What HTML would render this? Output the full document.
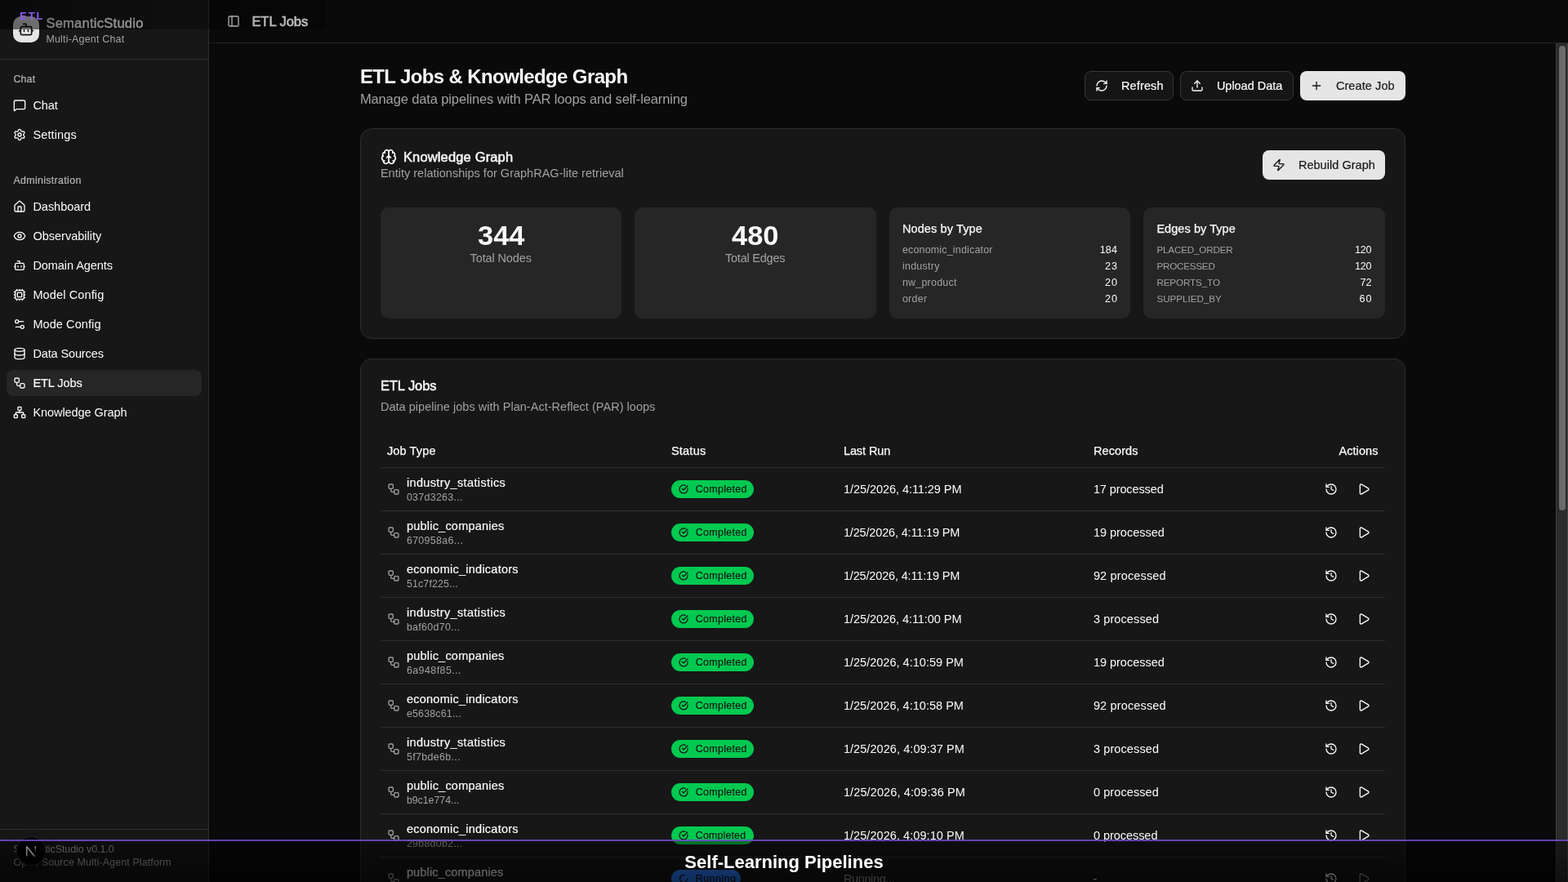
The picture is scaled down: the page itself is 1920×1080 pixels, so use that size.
<!DOCTYPE html>
<html lang="en">
<head>
<meta charset="utf-8">
<title>ETL Jobs - SemanticStudio</title>
<style>
*{box-sizing:border-box;margin:0;padding:0}
html,body{width:1920px;height:1080px;overflow:hidden;background:#0a0a0a;color:#fafafa;
  font-family:"Liberation Sans",sans-serif;font-size:14px;line-height:20px;white-space:nowrap;-webkit-font-smoothing:antialiased}
ul{list-style:none}
svg{display:block;flex:none}
.app{will-change:transform;position:absolute;left:0;top:0;width:1920px;height:1080px;display:flex;overflow:hidden}
/* sidebar */
.sb{width:256px;height:1080px;background:#171717;border-right:1px solid #2e2e2e;flex:none;position:relative;display:flex;flex-direction:column}
.sb-head{height:73px;border-bottom:1px solid #2e2e2e;padding:16px;display:flex;align-items:center;gap:8px}
.logo{width:32px;height:32px;border-radius:10px;background:#e5e5e5;color:#171717;display:flex;align-items:center;justify-content:center}
.brand .b1{font-size:16.5px;line-height:24px;color:#fafafa;-webkit-text-stroke:.45px #fafafa}
.brand .b2{font-size:12.4px;line-height:16px;color:#a1a1a1}
.sb-content{flex:1;display:flex;flex-direction:column;gap:8px}
.grp{padding:8px}
.gl{height:32px;padding:0 8px;display:flex;align-items:center;font-size:12.4px;color:#b4b4b4;-webkit-text-stroke:.2px #b4b4b4}
.grp ul{display:flex;flex-direction:column;gap:4px}
.mi{height:32px;border-radius:8px;padding:0 8px;display:flex;align-items:center;gap:8px;font-size:14.5px;color:#fafafa}
.mi.active{background:#262626;-webkit-text-stroke:.15px #fafafa}
.sb-foot{border-top:1px solid #2e2e2e;padding:16px;height:65px;font-size:12.4px;line-height:16px;color:#a1a1a1}
/* main */
.main{flex:1;position:relative;height:1080px;background:#0a0a0a}
.top{height:53px;border-bottom:1px solid #222;display:flex;align-items:center;padding:0 16px;gap:8px}
.trig{width:28px;height:28px;display:flex;align-items:center;justify-content:center;color:#fafafa}
.top h1{font-size:16.5px;line-height:28px;font-weight:400;-webkit-text-stroke:.5px #fafafa}
.scroll{position:absolute;left:0;top:53px;width:1649px;height:1027px;overflow:hidden;padding:24px}
.wrap{width:1280px;margin:0 auto}
.sbar{position:absolute;right:0;top:53px;width:15px;height:1027px;background:#2c2c2c;border-left:1px solid #3d3d3d;border-right:1px solid #484848}
.thumb{position:absolute;left:3px;top:3px;width:8px;height:569px;border-radius:4px;background:#6b6b6b}
.ph{display:flex;justify-content:space-between;align-items:center;height:56px}
.ph h2{font-size:24px;line-height:32px;font-weight:700;position:relative;top:1px}
.ph p{font-size:16.5px;line-height:24px;color:#a1a1a1}
.btns{display:flex;gap:8px}
.btn{height:36px;border-radius:8px;display:inline-flex;align-items:center;padding:0 12px;gap:16px;font-size:14.5px;white-space:nowrap;-webkit-text-stroke:.18px currentColor}
.btn.out{border:1px solid #373737;background:#151515;color:#fafafa}
.btn.pri{background:#e5e5e5;color:#171717}
.card{background:#171717;border:1px solid #2d2d2d;border-radius:14px;margin-top:24px;padding:24px}
.ch{display:flex;justify-content:space-between;align-items:center;height:40px}
.ct{display:flex;align-items:center;gap:8px;font-size:16.5px;line-height:20px;-webkit-text-stroke:.5px #fafafa}
.cd{font-size:14.5px;line-height:20px;color:#a1a1a1}
.stats{display:grid;grid-template-columns:repeat(4,1fr);gap:16px;margin-top:32px}
.st{height:136px;border-radius:10px;background:#262626;padding:16px}
.st.ctr{text-align:center}
.num{font-size:32px;line-height:36px;font-weight:700}
.num span{display:inline-block;transform:scale(1.075,1.03);position:relative;top:1px}
.lbl{font-size:14.5px;line-height:20px;color:#a1a1a1}
.sh{font-size:14.5px;line-height:20px;margin-bottom:8px;-webkit-text-stroke:.25px #fafafa}
.kv{display:flex;justify-content:space-between;font-size:12.4px;line-height:16px;margin-top:4px}
.kv:nth-child(2){margin-top:0}
.kv .k{color:#a1a1a1}
.kv .k.up{font-size:11.7px}
.kv .v{font-size:12.6px}
.jobs{height:800px}
.jtitle{font-size:16.5px;line-height:16px;-webkit-text-stroke:.5px #fafafa}
.jh .cd{margin-top:8px}
table{width:100%;border-collapse:collapse;margin-top:24px;table-layout:fixed}
th{height:40px;text-align:left;font-weight:400;font-size:14.5px;padding:0 8px;border-bottom:1px solid #2e2e2e;-webkit-text-stroke:.25px #fafafa}
td{height:53px;padding:8px;border-bottom:1px solid #2e2e2e;font-size:14.5px;vertical-align:middle}
.c1{width:348px}.c2{width:211px}.c3{width:306px}.c4{width:222px}.c5{text-align:right}
th.c5{text-align:right}
.jt{display:flex;align-items:center;gap:8px}
.wf{color:#a1a1a1}
.jn{font-size:14.5px;line-height:20px;-webkit-text-stroke:.18px #fafafa}
.ji{font-size:12.4px;line-height:16px;color:#a1a1a1}
.badge{display:inline-flex;align-items:center;height:22px;border-radius:11px;padding:0 9px;gap:8.5px;font-size:12.4px;line-height:16px;color:#171717;vertical-align:middle;-webkit-text-stroke:.2px #171717}
.badge.ok{background:#00c950;width:101px}
.badge.run{background:#2b7fff;width:85px}
.mut{color:#a1a1a1}
.acts{display:flex;justify-content:flex-end;gap:4px}
.ib{width:36px;height:36px;display:flex;align-items:center;justify-content:center;color:#fafafa}
.ib.dis{opacity:.5}
/* overlays */
.devn{position:absolute;left:20px;top:1024px;width:36px;height:36px;border-radius:18px;background:#000;box-shadow:inset 0 0 0 1px #262626,0 8px 16px rgba(0,0,0,.4)}
.ov-top{will-change:transform;position:absolute;left:0;top:0;width:400px;height:36px;background:linear-gradient(to right,rgba(0,0,0,.56),rgba(0,0,0,.2))}
.ov-top span{position:absolute;left:24px;top:12px;font-size:13px;line-height:15px;font-weight:700;letter-spacing:2px;color:#8b5cf6}
.ov-bot{will-change:transform;position:absolute;left:0;top:1028px;width:1920px;height:52px;border-top:2px solid rgba(139,92,246,.7);background:linear-gradient(to bottom,rgba(0,0,0,.42),rgba(0,0,0,.66))}
.cap{position:absolute;left:0;width:1920px;top:13px;text-align:center;font-size:22px;line-height:26px;font-weight:700;color:#fff}

.sb span,.top h1 span,.ph h2 span,.ph p span,.btn span,.ct span,.cd span,.sh span,.k span,.jtitle span,th span,td span{position:relative;left:.4px}
th.c5 span,.v span{left:0}

</style>
</head>
<body>
<div class="app">

<aside class="sb">
  <div class="sb-head">
    <div class="logo"><svg width="20" height="20" viewBox="0 0 24 24" fill="none" stroke="currentColor" stroke-width="2" stroke-linecap="round" stroke-linejoin="round"><path d="M12 8V4H8"/><rect width="16" height="12" x="4" y="8" rx="2"/><path d="M2 14h2"/><path d="M20 14h2"/><path d="M15 13v2"/><path d="M9 13v2"/></svg></div>
    <div class="brand"><div class="b1"><span style="letter-spacing:0.262px;margin-right:-0.262px">SemanticStudio</span></div><div class="b2"><span style="letter-spacing:0.234px;margin-right:-0.234px">Multi-Agent Chat</span></div></div>
  </div>
  <div class="sb-content">
    <div class="grp">
      <div class="gl"><span style="letter-spacing:0.190px;margin-right:-0.190px">Chat</span></div>
      <ul>
        <li class="mi"><svg width="16" height="16" viewBox="0 0 24 24" fill="none" stroke="currentColor" stroke-width="2" stroke-linecap="round" stroke-linejoin="round"><path d="M22 17a2 2 0 0 1-2 2H6.828a2 2 0 0 0-1.414.586l-2.202 2.202A.71.71 0 0 1 2 21.286V5a2 2 0 0 1 2-2h16a2 2 0 0 1 2 2z"/></svg><span style="letter-spacing:-0.115px;margin-right:0.115px">Chat</span></li>
        <li class="mi"><svg width="16" height="16" viewBox="0 0 24 24" fill="none" stroke="currentColor" stroke-width="2" stroke-linecap="round" stroke-linejoin="round"><path d="M9.671 4.136a2.34 2.34 0 0 1 4.659 0 2.34 2.34 0 0 0 3.319 1.915 2.34 2.34 0 0 1 2.33 4.033 2.34 2.34 0 0 0 0 3.831 2.34 2.34 0 0 1-2.33 4.033 2.34 2.34 0 0 0-3.319 1.915 2.34 2.34 0 0 1-4.659 0 2.34 2.34 0 0 0-3.32-1.915 2.34 2.34 0 0 1-2.33-4.033 2.34 2.34 0 0 0 0-3.831A2.34 2.34 0 0 1 6.35 6.051a2.34 2.34 0 0 0 3.319-1.915"/><circle cx="12" cy="12" r="3"/></svg><span style="letter-spacing:0.137px;margin-right:-0.137px">Settings</span></li>
      </ul>
    </div>
    <div class="grp">
      <div class="gl"><span style="letter-spacing:0.338px;margin-right:-0.338px">Administration</span></div>
      <ul>
        <li class="mi"><svg width="16" height="16" viewBox="0 0 24 24" fill="none" stroke="currentColor" stroke-width="2" stroke-linecap="round" stroke-linejoin="round"><path d="M15 21v-8a1 1 0 0 0-1-1h-4a1 1 0 0 0-1 1v8"/><path d="M3 10a2 2 0 0 1 .709-1.528l7-5.999a2 2 0 0 1 2.582 0l7 5.999A2 2 0 0 1 21 10v9a2 2 0 0 1-2 2H5a2 2 0 0 1-2-2z"/></svg><span style="letter-spacing:-0.025px;margin-right:0.025px">Dashboard</span></li>
        <li class="mi"><svg width="16" height="16" viewBox="0 0 24 24" fill="none" stroke="currentColor" stroke-width="2" stroke-linecap="round" stroke-linejoin="round"><path d="M2.062 12.348a1 1 0 0 1 0-.696 10.75 10.75 0 0 1 19.876 0 1 1 0 0 1 0 .696 10.75 10.75 0 0 1-19.876 0"/><circle cx="12" cy="12" r="3"/></svg><span style="letter-spacing:0.013px;margin-right:-0.013px">Observability</span></li>
        <li class="mi"><svg width="16" height="16" viewBox="0 0 24 24" fill="none" stroke="currentColor" stroke-width="2" stroke-linecap="round" stroke-linejoin="round"><path d="M12 8V4H8"/><rect width="16" height="12" x="4" y="8" rx="2"/><path d="M2 14h2"/><path d="M20 14h2"/><path d="M15 13v2"/><path d="M9 13v2"/></svg><span style="letter-spacing:-0.061px;margin-right:0.061px">Domain Agents</span></li>
        <li class="mi"><svg width="16" height="16" viewBox="0 0 24 24" fill="none" stroke="currentColor" stroke-width="2" stroke-linecap="round" stroke-linejoin="round"><path d="M12 20v2"/><path d="M12 2v2"/><path d="M17 20v2"/><path d="M17 2v2"/><path d="M2 12h2"/><path d="M2 17h2"/><path d="M2 7h2"/><path d="M20 12h2"/><path d="M20 17h2"/><path d="M20 7h2"/><path d="M7 20v2"/><path d="M7 2v2"/><rect x="4" y="4" width="16" height="16" rx="2"/><rect x="8" y="8" width="8" height="8" rx="1"/></svg><span style="letter-spacing:0.128px;margin-right:-0.128px">Model Config</span></li>
        <li class="mi"><svg width="16" height="16" viewBox="0 0 24 24" fill="none" stroke="currentColor" stroke-width="2" stroke-linecap="round" stroke-linejoin="round"><path d="M14 17H5"/><path d="M19 7h-9"/><circle cx="17" cy="17" r="3"/><circle cx="7" cy="7" r="3"/></svg><span style="letter-spacing:0.084px;margin-right:-0.084px">Mode Config</span></li>
        <li class="mi"><svg width="16" height="16" viewBox="0 0 24 24" fill="none" stroke="currentColor" stroke-width="2" stroke-linecap="round" stroke-linejoin="round"><ellipse cx="12" cy="5" rx="9" ry="3"/><path d="M3 5V19A9 3 0 0 0 21 19V5"/><path d="M3 12A9 3 0 0 0 21 12"/></svg><span style="letter-spacing:-0.123px;margin-right:0.123px">Data Sources</span></li>
        <li class="mi active"><svg width="16" height="16" viewBox="0 0 24 24" fill="none" stroke="currentColor" stroke-width="2" stroke-linecap="round" stroke-linejoin="round"><rect width="8" height="8" x="3" y="3" rx="2"/><path d="M7 11v4a2 2 0 0 0 2 2h4"/><rect width="8" height="8" x="13" y="13" rx="2"/></svg><span style="letter-spacing:-0.052px;margin-right:0.052px">ETL Jobs</span></li>
        <li class="mi"><svg width="16" height="16" viewBox="0 0 24 24" fill="none" stroke="currentColor" stroke-width="2" stroke-linecap="round" stroke-linejoin="round"><rect x="16" y="16" width="6" height="6" rx="1"/><rect x="2" y="16" width="6" height="6" rx="1"/><rect x="9" y="2" width="6" height="6" rx="1"/><path d="M5 16v-3a1 1 0 0 1 1-1h12a1 1 0 0 1 1 1v3"/><path d="M12 12V8"/></svg><span style="letter-spacing:-0.070px;margin-right:0.070px">Knowledge Graph</span></li>
      </ul>
    </div>
  </div>
  <div class="sb-foot"><p><span style="letter-spacing:-0.039px;margin-right:0.039px">SemanticStudio v0.1.0</span></p><p><span style="letter-spacing:0.143px;margin-right:-0.143px">Open Source Multi-Agent Platform</span></p></div>
</aside>

<div class="main">
  <header class="top">
    <span class="trig"><svg width="16" height="16" viewBox="0 0 24 24" fill="none" stroke="currentColor" stroke-width="2" stroke-linecap="round" stroke-linejoin="round"><rect width="18" height="18" x="3" y="3" rx="2"/><path d="M9 3v18"/></svg></span>
    <h1><span style="letter-spacing:-0.043px;margin-right:0.043px">ETL Jobs</span></h1>
  </header>
  <div class="scroll">
    <div class="wrap">
      <div class="ph">
        <div><h2><span style="letter-spacing:-0.617px;margin-right:0.617px">ETL Jobs &amp; Knowledge Graph</span></h2><p><span style="letter-spacing:-0.128px;margin-right:0.128px">Manage data pipelines with PAR loops and self-learning</span></p></div>
        <div class="btns">
          <span class="btn out" style="width:109px"><svg width="16" height="16" viewBox="0 0 24 24" fill="none" stroke="currentColor" stroke-width="2" stroke-linecap="round" stroke-linejoin="round"><path d="M3 12a9 9 0 0 1 9-9 9.75 9.75 0 0 1 6.74 2.74L21 8"/><path d="M21 3v5h-5"/><path d="M21 12a9 9 0 0 1-9 9 9.75 9.75 0 0 1-6.74-2.74L3 16"/><path d="M8 16H3v5"/></svg><span style="letter-spacing:0.150px;margin-right:-0.150px">Refresh</span></span>
          <span class="btn out" style="width:139px"><svg width="16" height="16" viewBox="0 0 24 24" fill="none" stroke="currentColor" stroke-width="2" stroke-linecap="round" stroke-linejoin="round"><path d="M21 15v4a2 2 0 0 1-2 2H5a2 2 0 0 1-2-2v-4"/><path d="m17 8-5-5-5 5"/><path d="M12 3v12"/></svg><span style="letter-spacing:-0.023px;margin-right:0.023px">Upload Data</span></span>
          <span class="btn pri" style="width:129px"><svg width="16" height="16" viewBox="0 0 24 24" fill="none" stroke="currentColor" stroke-width="2" stroke-linecap="round" stroke-linejoin="round"><path d="M5 12h14"/><path d="M12 5v14"/></svg><span style="letter-spacing:0.092px;margin-right:-0.092px">Create Job</span></span>
        </div>
      </div>
      <section class="card kg">
        <div class="ch">
          <div><div class="ct"><svg width="20" height="20" viewBox="0 0 24 24" fill="none" stroke="currentColor" stroke-width="2" stroke-linecap="round" stroke-linejoin="round"><path d="M12 18V5"/><path d="M15 13a4.17 4.17 0 0 1-3-4 4.17 4.17 0 0 1-3 4"/><path d="M17.598 6.5A3 3 0 1 0 12 5a3 3 0 1 0-5.598 1.5"/><path d="M17.997 5.125a4 4 0 0 1 2.526 5.77"/><path d="M18 18a4 4 0 0 0 2-7.464"/><path d="M19.967 17.483A4 4 0 1 1 12 18a4 4 0 1 1-7.967-.517"/><path d="M6 18a4 4 0 0 1-2-7.464"/><path d="M6.003 5.125a4 4 0 0 0-2.526 5.77"/></svg><span style="letter-spacing:0.153px;margin-right:-0.153px">Knowledge Graph</span></div><div class="cd"><span style="letter-spacing:0.011px;margin-right:-0.011px">Entity relationships for GraphRAG-lite retrieval</span></div></div>
          <span class="btn pri" style="width:150px"><svg width="16" height="16" viewBox="0 0 24 24" fill="none" stroke="currentColor" stroke-width="2" stroke-linecap="round" stroke-linejoin="round"><path d="M4 14a1 1 0 0 1-.78-1.63l9.9-10.2a.5.5 0 0 1 .86.46l-1.92 6.02A1 1 0 0 0 13 10h7a1 1 0 0 1 .78 1.63l-9.9 10.2a.5.5 0 0 1-.86-.46l1.92-6.02A1 1 0 0 0 11 14z"/></svg><span style="letter-spacing:0.038px;margin-right:-0.038px">Rebuild Graph</span></span>
        </div>
        <div class="stats">
          <div class="st ctr"><div class="num"><span>344</span></div><div class="lbl"><span style="letter-spacing:-0.127px;margin-right:0.127px">Total Nodes</span></div></div>
          <div class="st ctr"><div class="num"><span>480</span></div><div class="lbl"><span style="letter-spacing:-0.215px;margin-right:0.215px">Total Edges</span></div></div>
          <div class="st"><div class="sh"><span style="letter-spacing:0.116px;margin-right:-0.116px">Nodes by Type</span></div><div class="kv"><span class="k"><span style="letter-spacing:0.225px;margin-right:-0.225px">economic_indicator</span></span><span class="v"><span style="letter-spacing:0.157px;margin-right:-0.157px">184</span></span></div><div class="kv"><span class="k"><span style="letter-spacing:0.299px;margin-right:-0.299px">industry</span></span><span class="v"><span style="letter-spacing:1.036px;margin-right:-1.036px">23</span></span></div><div class="kv"><span class="k"><span style="letter-spacing:0.275px;margin-right:-0.275px">nw_product</span></span><span class="v"><span style="letter-spacing:1.037px;margin-right:-1.037px">20</span></span></div><div class="kv"><span class="k"><span style="letter-spacing:0.307px;margin-right:-0.307px">order</span></span><span class="v"><span style="letter-spacing:1.037px;margin-right:-1.037px">20</span></span></div></div>
          <div class="st"><div class="sh"><span style="letter-spacing:0.057px;margin-right:-0.057px">Edges by Type</span></div><div class="kv"><span class="k up"><span style="letter-spacing:-0.190px;margin-right:0.190px">PLACED_ORDER</span></span><span class="v"><span style="letter-spacing:-0.262px;margin-right:0.262px">120</span></span></div><div class="kv"><span class="k up"><span style="letter-spacing:-0.242px;margin-right:0.242px">PROCESSED</span></span><span class="v"><span style="letter-spacing:-0.262px;margin-right:0.262px">120</span></span></div><div class="kv"><span class="k up"><span style="letter-spacing:-0.133px;margin-right:0.133px">REPORTS_TO</span></span><span class="v"><span style="letter-spacing:0.080px;margin-right:-0.080px">72</span></span></div><div class="kv"><span class="k up"><span style="letter-spacing:-0.054px;margin-right:0.054px">SUPPLIED_BY</span></span><span class="v"><span style="letter-spacing:0.967px;margin-right:-0.967px">60</span></span></div></div>
        </div>
      </section>
      <section class="card jobs">
        <div class="jh"><div class="jtitle"><span style="letter-spacing:-0.062px;margin-right:0.062px">ETL Jobs</span></div><div class="cd"><span style="letter-spacing:0.029px;margin-right:-0.029px">Data pipeline jobs with Plan-Act-Reflect (PAR) loops</span></div></div>
        <table>
          <thead><tr><th class="c1"><span style="letter-spacing:0.146px;margin-right:-0.146px">Job Type</span></th><th class="c2"><span style="letter-spacing:0.238px;margin-right:-0.238px">Status</span></th><th class="c3"><span style="letter-spacing:-0.073px;margin-right:0.073px">Last Run</span></th><th class="c4"><span style="letter-spacing:0.100px;margin-right:-0.100px">Records</span></th><th class="c5"><span style="letter-spacing:0.095px;margin-right:-0.095px">Actions</span></th></tr></thead>
          <tbody>
<tr><td class="c1"><div class="jt"><svg class="wf" width="16" height="16" viewBox="0 0 24 24" fill="none" stroke="currentColor" stroke-width="2" stroke-linecap="round" stroke-linejoin="round"><rect width="8" height="8" x="3" y="3" rx="2"/><path d="M7 11v4a2 2 0 0 0 2 2h4"/><rect width="8" height="8" x="13" y="13" rx="2"/></svg><div><div class="jn"><span style="letter-spacing:0.364px;margin-right:-0.364px">industry_statistics</span></div><div class="ji"><span style="letter-spacing:0.307px;margin-right:-0.307px">037d3263...</span></div></div></div></td><td class="c2"><span class="badge ok"><svg width="12" height="12" viewBox="0 0 24 24" fill="none" stroke="currentColor" stroke-width="2.5" stroke-linecap="round" stroke-linejoin="round"><path d="M21.801 10A10 10 0 1 1 17 3.335"/><path d="m9 11 3 3L22 4"/></svg><span style="letter-spacing:0.325px;margin-right:-0.325px">Completed</span></span></td><td class="c3"><span style="letter-spacing:-0.051px;margin-right:0.051px">1/25/2026, 4:11:29 PM</span></td><td class="c4"><span style="letter-spacing:-0.109px;margin-right:0.109px">17 processed</span></td><td class="c5"><div class="acts"><span class="ib"><svg width="16" height="16" viewBox="0 0 24 24" fill="none" stroke="currentColor" stroke-width="2" stroke-linecap="round" stroke-linejoin="round"><path d="M3 12a9 9 0 1 0 9-9 9.750 9.750 0 0 0-6.740 2.740L3 8"/><path d="M3 3v5h5"/><path d="M12 7v5l4 2"/></svg></span><span class="ib"><svg width="16" height="16" viewBox="0 0 24 24" fill="none" stroke="currentColor" stroke-width="2" stroke-linecap="round" stroke-linejoin="round"><path d="M5 5a2 2 0 0 1 3.008-1.728l11.997 6.998a2 2 0 0 1 .003 3.458l-12 7A2 2 0 0 1 5 19z"/></svg></span></div></td></tr>
<tr><td class="c1"><div class="jt"><svg class="wf" width="16" height="16" viewBox="0 0 24 24" fill="none" stroke="currentColor" stroke-width="2" stroke-linecap="round" stroke-linejoin="round"><rect width="8" height="8" x="3" y="3" rx="2"/><path d="M7 11v4a2 2 0 0 0 2 2h4"/><rect width="8" height="8" x="13" y="13" rx="2"/></svg><div><div class="jn"><span style="letter-spacing:0.222px;margin-right:-0.222px">public_companies</span></div><div class="ji"><span style="letter-spacing:0.348px;margin-right:-0.348px">670958a6...</span></div></div></div></td><td class="c2"><span class="badge ok"><svg width="12" height="12" viewBox="0 0 24 24" fill="none" stroke="currentColor" stroke-width="2.5" stroke-linecap="round" stroke-linejoin="round"><path d="M21.801 10A10 10 0 1 1 17 3.335"/><path d="m9 11 3 3L22 4"/></svg><span style="letter-spacing:0.325px;margin-right:-0.325px">Completed</span></span></td><td class="c3"><span style="letter-spacing:-0.160px;margin-right:0.160px">1/25/2026, 4:11:19 PM</span></td><td class="c4"><span style="letter-spacing:-0.018px;margin-right:0.018px">19 processed</span></td><td class="c5"><div class="acts"><span class="ib"><svg width="16" height="16" viewBox="0 0 24 24" fill="none" stroke="currentColor" stroke-width="2" stroke-linecap="round" stroke-linejoin="round"><path d="M3 12a9 9 0 1 0 9-9 9.750 9.750 0 0 0-6.740 2.740L3 8"/><path d="M3 3v5h5"/><path d="M12 7v5l4 2"/></svg></span><span class="ib"><svg width="16" height="16" viewBox="0 0 24 24" fill="none" stroke="currentColor" stroke-width="2" stroke-linecap="round" stroke-linejoin="round"><path d="M5 5a2 2 0 0 1 3.008-1.728l11.997 6.998a2 2 0 0 1 .003 3.458l-12 7A2 2 0 0 1 5 19z"/></svg></span></div></td></tr>
<tr><td class="c1"><div class="jt"><svg class="wf" width="16" height="16" viewBox="0 0 24 24" fill="none" stroke="currentColor" stroke-width="2" stroke-linecap="round" stroke-linejoin="round"><rect width="8" height="8" x="3" y="3" rx="2"/><path d="M7 11v4a2 2 0 0 0 2 2h4"/><rect width="8" height="8" x="13" y="13" rx="2"/></svg><div><div class="jn"><span style="letter-spacing:0.253px;margin-right:-0.253px">economic_indicators</span></div><div class="ji"><span style="letter-spacing:0.155px;margin-right:-0.155px">51c7f225...</span></div></div></div></td><td class="c2"><span class="badge ok"><svg width="12" height="12" viewBox="0 0 24 24" fill="none" stroke="currentColor" stroke-width="2.5" stroke-linecap="round" stroke-linejoin="round"><path d="M21.801 10A10 10 0 1 1 17 3.335"/><path d="m9 11 3 3L22 4"/></svg><span style="letter-spacing:0.325px;margin-right:-0.325px">Completed</span></span></td><td class="c3"><span style="letter-spacing:-0.160px;margin-right:0.160px">1/25/2026, 4:11:19 PM</span></td><td class="c4"><span style="letter-spacing:0.155px;margin-right:-0.155px">92 processed</span></td><td class="c5"><div class="acts"><span class="ib"><svg width="16" height="16" viewBox="0 0 24 24" fill="none" stroke="currentColor" stroke-width="2" stroke-linecap="round" stroke-linejoin="round"><path d="M3 12a9 9 0 1 0 9-9 9.750 9.750 0 0 0-6.740 2.740L3 8"/><path d="M3 3v5h5"/><path d="M12 7v5l4 2"/></svg></span><span class="ib"><svg width="16" height="16" viewBox="0 0 24 24" fill="none" stroke="currentColor" stroke-width="2" stroke-linecap="round" stroke-linejoin="round"><path d="M5 5a2 2 0 0 1 3.008-1.728l11.997 6.998a2 2 0 0 1 .003 3.458l-12 7A2 2 0 0 1 5 19z"/></svg></span></div></td></tr>
<tr><td class="c1"><div class="jt"><svg class="wf" width="16" height="16" viewBox="0 0 24 24" fill="none" stroke="currentColor" stroke-width="2" stroke-linecap="round" stroke-linejoin="round"><rect width="8" height="8" x="3" y="3" rx="2"/><path d="M7 11v4a2 2 0 0 0 2 2h4"/><rect width="8" height="8" x="13" y="13" rx="2"/></svg><div><div class="jn"><span style="letter-spacing:0.364px;margin-right:-0.364px">industry_statistics</span></div><div class="ji"><span style="letter-spacing:0.334px;margin-right:-0.334px">baf60d70...</span></div></div></div></td><td class="c2"><span class="badge ok"><svg width="12" height="12" viewBox="0 0 24 24" fill="none" stroke="currentColor" stroke-width="2.5" stroke-linecap="round" stroke-linejoin="round"><path d="M21.801 10A10 10 0 1 1 17 3.335"/><path d="m9 11 3 3L22 4"/></svg><span style="letter-spacing:0.325px;margin-right:-0.325px">Completed</span></span></td><td class="c3"><span style="letter-spacing:-0.051px;margin-right:0.051px">1/25/2026, 4:11:00 PM</span></td><td class="c4"><span style="letter-spacing:0.110px;margin-right:-0.110px">3 processed</span></td><td class="c5"><div class="acts"><span class="ib"><svg width="16" height="16" viewBox="0 0 24 24" fill="none" stroke="currentColor" stroke-width="2" stroke-linecap="round" stroke-linejoin="round"><path d="M3 12a9 9 0 1 0 9-9 9.750 9.750 0 0 0-6.740 2.740L3 8"/><path d="M3 3v5h5"/><path d="M12 7v5l4 2"/></svg></span><span class="ib"><svg width="16" height="16" viewBox="0 0 24 24" fill="none" stroke="currentColor" stroke-width="2" stroke-linecap="round" stroke-linejoin="round"><path d="M5 5a2 2 0 0 1 3.008-1.728l11.997 6.998a2 2 0 0 1 .003 3.458l-12 7A2 2 0 0 1 5 19z"/></svg></span></div></td></tr>
<tr><td class="c1"><div class="jt"><svg class="wf" width="16" height="16" viewBox="0 0 24 24" fill="none" stroke="currentColor" stroke-width="2" stroke-linecap="round" stroke-linejoin="round"><rect width="8" height="8" x="3" y="3" rx="2"/><path d="M7 11v4a2 2 0 0 0 2 2h4"/><rect width="8" height="8" x="13" y="13" rx="2"/></svg><div><div class="jn"><span style="letter-spacing:0.222px;margin-right:-0.222px">public_companies</span></div><div class="ji"><span style="letter-spacing:0.464px;margin-right:-0.464px">6a948f85...</span></div></div></div></td><td class="c2"><span class="badge ok"><svg width="12" height="12" viewBox="0 0 24 24" fill="none" stroke="currentColor" stroke-width="2.5" stroke-linecap="round" stroke-linejoin="round"><path d="M21.801 10A10 10 0 1 1 17 3.335"/><path d="m9 11 3 3L22 4"/></svg><span style="letter-spacing:0.325px;margin-right:-0.325px">Completed</span></span></td><td class="c3"><span style="letter-spacing:0.014px;margin-right:-0.014px">1/25/2026, 4:10:59 PM</span></td><td class="c4"><span style="letter-spacing:-0.018px;margin-right:0.018px">19 processed</span></td><td class="c5"><div class="acts"><span class="ib"><svg width="16" height="16" viewBox="0 0 24 24" fill="none" stroke="currentColor" stroke-width="2" stroke-linecap="round" stroke-linejoin="round"><path d="M3 12a9 9 0 1 0 9-9 9.750 9.750 0 0 0-6.740 2.740L3 8"/><path d="M3 3v5h5"/><path d="M12 7v5l4 2"/></svg></span><span class="ib"><svg width="16" height="16" viewBox="0 0 24 24" fill="none" stroke="currentColor" stroke-width="2" stroke-linecap="round" stroke-linejoin="round"><path d="M5 5a2 2 0 0 1 3.008-1.728l11.997 6.998a2 2 0 0 1 .003 3.458l-12 7A2 2 0 0 1 5 19z"/></svg></span></div></td></tr>
<tr><td class="c1"><div class="jt"><svg class="wf" width="16" height="16" viewBox="0 0 24 24" fill="none" stroke="currentColor" stroke-width="2" stroke-linecap="round" stroke-linejoin="round"><rect width="8" height="8" x="3" y="3" rx="2"/><path d="M7 11v4a2 2 0 0 0 2 2h4"/><rect width="8" height="8" x="13" y="13" rx="2"/></svg><div><div class="jn"><span style="letter-spacing:0.253px;margin-right:-0.253px">economic_indicators</span></div><div class="ji"><span style="letter-spacing:0.194px;margin-right:-0.194px">e5638c61...</span></div></div></div></td><td class="c2"><span class="badge ok"><svg width="12" height="12" viewBox="0 0 24 24" fill="none" stroke="currentColor" stroke-width="2.5" stroke-linecap="round" stroke-linejoin="round"><path d="M21.801 10A10 10 0 1 1 17 3.335"/><path d="m9 11 3 3L22 4"/></svg><span style="letter-spacing:0.325px;margin-right:-0.325px">Completed</span></span></td><td class="c3"><span style="letter-spacing:0.014px;margin-right:-0.014px">1/25/2026, 4:10:58 PM</span></td><td class="c4"><span style="letter-spacing:0.155px;margin-right:-0.155px">92 processed</span></td><td class="c5"><div class="acts"><span class="ib"><svg width="16" height="16" viewBox="0 0 24 24" fill="none" stroke="currentColor" stroke-width="2" stroke-linecap="round" stroke-linejoin="round"><path d="M3 12a9 9 0 1 0 9-9 9.750 9.750 0 0 0-6.740 2.740L3 8"/><path d="M3 3v5h5"/><path d="M12 7v5l4 2"/></svg></span><span class="ib"><svg width="16" height="16" viewBox="0 0 24 24" fill="none" stroke="currentColor" stroke-width="2" stroke-linecap="round" stroke-linejoin="round"><path d="M5 5a2 2 0 0 1 3.008-1.728l11.997 6.998a2 2 0 0 1 .003 3.458l-12 7A2 2 0 0 1 5 19z"/></svg></span></div></td></tr>
<tr><td class="c1"><div class="jt"><svg class="wf" width="16" height="16" viewBox="0 0 24 24" fill="none" stroke="currentColor" stroke-width="2" stroke-linecap="round" stroke-linejoin="round"><rect width="8" height="8" x="3" y="3" rx="2"/><path d="M7 11v4a2 2 0 0 0 2 2h4"/><rect width="8" height="8" x="13" y="13" rx="2"/></svg><div><div class="jn"><span style="letter-spacing:0.364px;margin-right:-0.364px">industry_statistics</span></div><div class="ji"><span style="letter-spacing:0.370px;margin-right:-0.370px">5f7bde6b...</span></div></div></div></td><td class="c2"><span class="badge ok"><svg width="12" height="12" viewBox="0 0 24 24" fill="none" stroke="currentColor" stroke-width="2.5" stroke-linecap="round" stroke-linejoin="round"><path d="M21.801 10A10 10 0 1 1 17 3.335"/><path d="m9 11 3 3L22 4"/></svg><span style="letter-spacing:0.325px;margin-right:-0.325px">Completed</span></span></td><td class="c3"><span style="letter-spacing:0.064px;margin-right:-0.064px">1/25/2026, 4:09:37 PM</span></td><td class="c4"><span style="letter-spacing:0.110px;margin-right:-0.110px">3 processed</span></td><td class="c5"><div class="acts"><span class="ib"><svg width="16" height="16" viewBox="0 0 24 24" fill="none" stroke="currentColor" stroke-width="2" stroke-linecap="round" stroke-linejoin="round"><path d="M3 12a9 9 0 1 0 9-9 9.750 9.750 0 0 0-6.740 2.740L3 8"/><path d="M3 3v5h5"/><path d="M12 7v5l4 2"/></svg></span><span class="ib"><svg width="16" height="16" viewBox="0 0 24 24" fill="none" stroke="currentColor" stroke-width="2" stroke-linecap="round" stroke-linejoin="round"><path d="M5 5a2 2 0 0 1 3.008-1.728l11.997 6.998a2 2 0 0 1 .003 3.458l-12 7A2 2 0 0 1 5 19z"/></svg></span></div></td></tr>
<tr><td class="c1"><div class="jt"><svg class="wf" width="16" height="16" viewBox="0 0 24 24" fill="none" stroke="currentColor" stroke-width="2" stroke-linecap="round" stroke-linejoin="round"><rect width="8" height="8" x="3" y="3" rx="2"/><path d="M7 11v4a2 2 0 0 0 2 2h4"/><rect width="8" height="8" x="13" y="13" rx="2"/></svg><div><div class="jn"><span style="letter-spacing:0.222px;margin-right:-0.222px">public_companies</span></div><div class="ji"><span style="letter-spacing:-0.034px;margin-right:0.034px">b9c1e774...</span></div></div></div></td><td class="c2"><span class="badge ok"><svg width="12" height="12" viewBox="0 0 24 24" fill="none" stroke="currentColor" stroke-width="2.5" stroke-linecap="round" stroke-linejoin="round"><path d="M21.801 10A10 10 0 1 1 17 3.335"/><path d="m9 11 3 3L22 4"/></svg><span style="letter-spacing:0.325px;margin-right:-0.325px">Completed</span></span></td><td class="c3"><span style="letter-spacing:0.114px;margin-right:-0.114px">1/25/2026, 4:09:36 PM</span></td><td class="c4"><span style="letter-spacing:0.090px;margin-right:-0.090px">0 processed</span></td><td class="c5"><div class="acts"><span class="ib"><svg width="16" height="16" viewBox="0 0 24 24" fill="none" stroke="currentColor" stroke-width="2" stroke-linecap="round" stroke-linejoin="round"><path d="M3 12a9 9 0 1 0 9-9 9.750 9.750 0 0 0-6.740 2.740L3 8"/><path d="M3 3v5h5"/><path d="M12 7v5l4 2"/></svg></span><span class="ib"><svg width="16" height="16" viewBox="0 0 24 24" fill="none" stroke="currentColor" stroke-width="2" stroke-linecap="round" stroke-linejoin="round"><path d="M5 5a2 2 0 0 1 3.008-1.728l11.997 6.998a2 2 0 0 1 .003 3.458l-12 7A2 2 0 0 1 5 19z"/></svg></span></div></td></tr>
<tr><td class="c1"><div class="jt"><svg class="wf" width="16" height="16" viewBox="0 0 24 24" fill="none" stroke="currentColor" stroke-width="2" stroke-linecap="round" stroke-linejoin="round"><rect width="8" height="8" x="3" y="3" rx="2"/><path d="M7 11v4a2 2 0 0 0 2 2h4"/><rect width="8" height="8" x="13" y="13" rx="2"/></svg><div><div class="jn"><span style="letter-spacing:0.253px;margin-right:-0.253px">economic_indicators</span></div><div class="ji"><span style="letter-spacing:0.279px;margin-right:-0.279px">29b8d0b2...</span></div></div></div></td><td class="c2"><span class="badge ok"><svg width="12" height="12" viewBox="0 0 24 24" fill="none" stroke="currentColor" stroke-width="2.5" stroke-linecap="round" stroke-linejoin="round"><path d="M21.801 10A10 10 0 1 1 17 3.335"/><path d="m9 11 3 3L22 4"/></svg><span style="letter-spacing:0.171px;margin-right:-0.171px">Completed</span></span></td><td class="c3"><span style="letter-spacing:0.058px;margin-right:-0.058px">1/25/2026, 4:09:10 PM</span></td><td class="c4"><span style="letter-spacing:-0.043px;margin-right:0.043px">0 processed</span></td><td class="c5"><div class="acts"><span class="ib"><svg width="16" height="16" viewBox="0 0 24 24" fill="none" stroke="currentColor" stroke-width="2" stroke-linecap="round" stroke-linejoin="round"><path d="M3 12a9 9 0 1 0 9-9 9.750 9.750 0 0 0-6.740 2.740L3 8"/><path d="M3 3v5h5"/><path d="M12 7v5l4 2"/></svg></span><span class="ib"><svg width="16" height="16" viewBox="0 0 24 24" fill="none" stroke="currentColor" stroke-width="2" stroke-linecap="round" stroke-linejoin="round"><path d="M5 5a2 2 0 0 1 3.008-1.728l11.997 6.998a2 2 0 0 1 .003 3.458l-12 7A2 2 0 0 1 5 19z"/></svg></span></div></td></tr>
<tr><td class="c1"><div class="jt"><svg class="wf" width="16" height="16" viewBox="0 0 24 24" fill="none" stroke="currentColor" stroke-width="2" stroke-linecap="round" stroke-linejoin="round"><rect width="8" height="8" x="3" y="3" rx="2"/><path d="M7 11v4a2 2 0 0 0 2 2h4"/><rect width="8" height="8" x="13" y="13" rx="2"/></svg><div><div class="jn"><span style="letter-spacing:0.152px;margin-right:-0.152px">public_companies</span></div><div class="ji"><span style="letter-spacing:0.048px;margin-right:-0.048px">a41c09e7...</span></div></div></div></td><td class="c2"><span class="badge run"><svg width="12" height="12" viewBox="0 0 24 24" fill="none" stroke="currentColor" stroke-width="2.5" stroke-linecap="round" stroke-linejoin="round"><path d="M21 12a9 9 0 1 1-6.219-8.560"/></svg><span style="letter-spacing:0.472px;margin-right:-0.472px">Running</span></span></td><td class="c3 mut"><span style="letter-spacing:-0.363px;margin-right:0.363px">Running...</span></td><td class="c4">-</td><td class="c5"><div class="acts"><span class="ib"><svg width="16" height="16" viewBox="0 0 24 24" fill="none" stroke="currentColor" stroke-width="2" stroke-linecap="round" stroke-linejoin="round"><path d="M3 12a9 9 0 1 0 9-9 9.750 9.750 0 0 0-6.740 2.740L3 8"/><path d="M3 3v5h5"/><path d="M12 7v5l4 2"/></svg></span><span class="ib dis"><svg width="16" height="16" viewBox="0 0 24 24" fill="none" stroke="currentColor" stroke-width="2" stroke-linecap="round" stroke-linejoin="round"><path d="M5 5a2 2 0 0 1 3.008-1.728l11.997 6.998a2 2 0 0 1 .003 3.458l-12 7A2 2 0 0 1 5 19z"/></svg></span></div></td></tr>
          </tbody>
        </table>
      </section>
    </div>
  </div>
  <div class="sbar"><div class="thumb"></div></div>
</div>
</div>

<div class="devn"><svg width="36" height="36" viewBox="0 0 36 36" fill="none"><linearGradient id="ng1" gradientUnits="userSpaceOnUse" x1="15" y1="14" x2="24" y2="25.5"><stop offset="0" stop-color="#fff"/><stop offset=".75" stop-color="#fff"/><stop offset="1" stop-color="#fff" stop-opacity="0"/></linearGradient><linearGradient id="ng2" gradientUnits="userSpaceOnUse" x1="23.3" y1="12" x2="23.3" y2="20"><stop offset="0" stop-color="#fff"/><stop offset="1" stop-color="#fff" stop-opacity="0"/></linearGradient><path d="M12.7 24.3V12.6" stroke="#fff" stroke-width="1.5"/><path d="M12.4 12.3l11.3 14" stroke="url(#ng1)" stroke-width="1.7"/><path d="M23.3 12v8" stroke="url(#ng2)" stroke-width="1.5"/></svg></div>
<div class="ov-top"><span>ETL</span></div>
<div class="ov-bot"><div class="cap">Self-Learning Pipelines</div></div>

</body>
</html>
